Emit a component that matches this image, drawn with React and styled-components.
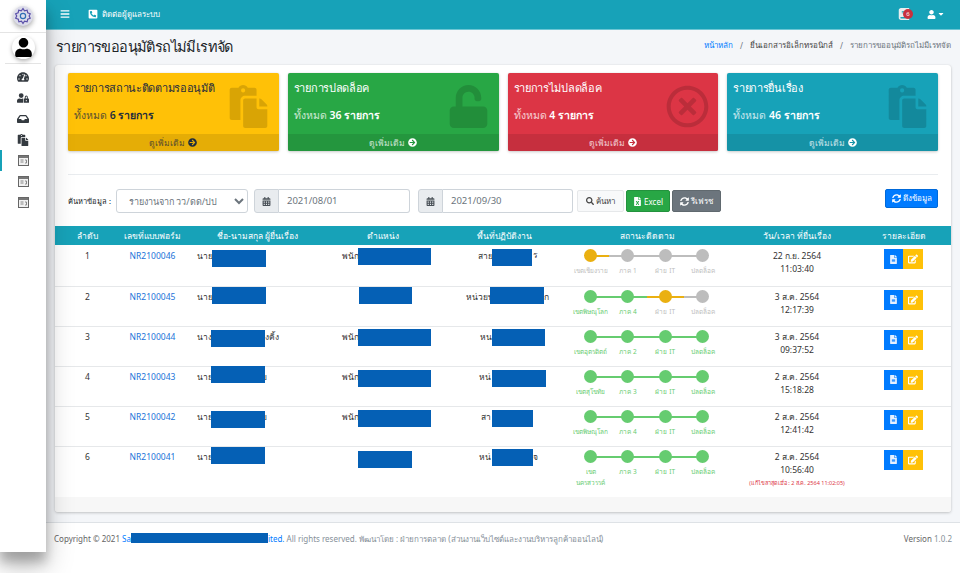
import React from 'react'
import styled, {createGlobalStyle} from 'styled-components'
import {
  FaBars, FaPhoneSquareAlt, FaUser, FaCaretDown, FaTachometerAlt, FaUserLock, FaInbox, FaPaste,
  FaUnlock, FaRegTimesCircle, FaArrowCircleRight, FaCalendarAlt, FaSearch, FaFileExcel, FaSyncAlt,
  FaFileAlt, FaEdit, FaBook,
} from 'react-icons/fa'

const GlobalStyle = createGlobalStyle`
  html, body {
    margin: 0;
    height: 573px;
    overflow: hidden;
    background: #fff;
    font-family: "Noto Sans", Inter, "Liberation Sans", sans-serif;
    color: #212529;
  }
  * { box-sizing: border-box; }
`

const boxes = [
  {title: 'รายการสถานะติดตามรออนุมัติ', total: '6 รายการ', bg: '#ffc107', strip: '#e5ad06', color: '#1f2d3d', Icon: FaPaste},
  {title: 'รายการปลดล็อค', total: '36 รายการ', bg: '#28a745', strip: '#24963e', color: '#fff', Icon: FaUnlock},
  {title: 'รายการไม่ปลดล็อค', total: '4 รายการ', bg: '#dc3545', strip: '#c62f3e', color: '#fff', Icon: FaRegTimesCircle},
  {title: 'รายการยื่นเรื่อง', total: '46 รายการ', bg: '#17a2b8', strip: '#1592a6', color: '#fff', Icon: FaPaste},
]

// ชื่อ ตำแหน่ง พื้นที่ถูกบังด้วยแถบสีน้ำเงิน x,y,w คือตำแหน่งแถบในช่อง
const rows = [
  {
    no: 1, form: 'NR2100046', date: '22 ก.ย. 2564', time: '11:03:40', current: 0,
    steps: ['เขตเชียงราย', 'ภาค 1', 'ฝ่าย IT', 'ปลดล็อค'],
    name: {lead: 'นาย', x: 27, y: 5, w: 54},
    pos: {lead: 'พนัก', x: 28, y: 3, w: 73},
    area: {lead: 'สาย', pad: 42, x: 56, y: 4, w: 40, tail: 'ร', tailX: 97},
  },
  {
    no: 2, form: 'NR2100045', date: '3 ส.ค. 2564', time: '12:17:39', current: 2,
    steps: ['เขตพิษณุโลก', 'ภาค 4', 'ฝ่าย IT', 'ปลดล็อค'],
    name: {lead: 'นาย', x: 27, y: 0, w: 54},
    pos: {x: 29, y: 0, w: 53},
    area: {lead: 'หน่วยบ', pad: 30, x: 54, y: 0, w: 54, tail: 'ก', tailX: 108},
  },
  {
    no: 3, form: 'NR2100044', date: '3 ส.ค. 2564', time: '09:37:52', current: 4,
    steps: ['เขตอุตรดิตถ์', 'ภาค 2', 'ฝ่าย IT', 'ปลดล็อค'],
    name: {lead: 'นาง', x: 26, y: 3, w: 54, tail: 'งคิ้ง', tailX: 80},
    pos: {lead: 'พนัก', x: 28, y: 2, w: 73},
    area: {lead: 'หน', pad: 44, x: 56, y: 2, w: 53},
  },
  {
    no: 4, form: 'NR2100043', date: '2 ส.ค. 2564', time: '15:18:28', current: 4,
    steps: ['เขตสุโขทัย', 'ภาค 3', 'ฝ่าย IT', 'ปลดล็อค'],
    name: {lead: 'นาย', x: 26, y: -1, w: 54, tail: 'ย', tailX: 77},
    pos: {lead: 'พนัก', x: 28, y: 3, w: 73},
    area: {lead: 'หน่', pad: 43, x: 56, y: 3, w: 54},
  },
  {
    no: 5, form: 'NR2100042', date: '2 ส.ค. 2564', time: '12:41:42', current: 4,
    steps: ['เขตพิษณุโลก', 'ภาค 4', 'ฝ่าย IT', 'ปลดล็อค'],
    name: {lead: 'นาย', x: 26, y: 4, w: 54, tail: 'ย', tailX: 77},
    pos: {lead: 'พนัก', x: 28, y: 3, w: 73},
    area: {lead: 'สา', pad: 45, x: 56, y: 3, w: 41},
  },
  {
    no: 6, form: 'NR2100041', date: '2 ส.ค. 2564', time: '10:56:40', current: 4,
    steps: ['เขต\nนครสวรรค์', 'ภาค 3', 'ฝ่าย IT', 'ปลดล็อค'],
    edited: '(แก้ไขล่าสุดเมื่อ : 2 ส.ค. 2564 11:02:05)',
    name: {lead: 'นาย', x: 26, y: 0, w: 54},
    pos: {x: 28, y: 4, w: 54},
    area: {lead: 'หน่', pad: 43, x: 56, y: 2, w: 41, tail: 'จ', tailX: 97},
  },
]

const LogoMark = () => (
  <svg width="18" height="18" viewBox="0 0 24 24" fill="none" stroke="#5a4fa8" strokeWidth="1.6">
    <path d="M12 2l2 3 3.500-.8.800 3.500 3.300 1.300-1.400 3 1.400 3-3.300 1.300-.8 3.500-3.500-.8-2 3-2-3-3.500.8-.8-3.500L2.200 15l1.400-3-1.400-3 3.300-1.300.8-3.500 3.500.8z" />
    <circle cx="12" cy="12" r="3.500" stroke="#2f6fb5" />
  </svg>
)

const FormIcon = () => (
  <svg width="11" height="11" viewBox="0 0 11 11">
    <rect x=".5" y=".5" width="10" height="10" fill="#f1f1f1" stroke="#666" />
    <rect x="1" y="1" width="9" height="2" fill="#777" />
    <path d="M2.500 5h3M2.500 7h3M7 5h1.500v3H7" stroke="#888" fill="none" />
  </svg>
)

const Masked = ({lead, pad, x, y, w, tail, tailX}) => (
  <MaskedCell $pad={pad}>
    {lead}
    {tail && <Tail $x={tailX}>{tail}</Tail>}
    <Redact $x={x} $y={y} $w={w} />
  </MaskedCell>
)

const Stepper = ({steps, current}) => (
  <StepList>
    {steps.map((label, i) => {
      const state = i < current ? 'done' : i === current ? 'active' : 'idle'
      return (
        <Step key={i} $state={state} $first={i === 0} $last={i === steps.length - 1}>
          <Dot $state={state} />
          <StepLabel $done={state === 'done'}>{label}</StepLabel>
        </Step>
      )
    })}
  </StepList>
)

const App = () => (
  <Page>
    <GlobalStyle />
    <Sidebar>
      <LogoRow><LogoBadge><LogoMark /></LogoBadge></LogoRow>
      <AvatarRow><Avatar><FaUser size={19} /></Avatar></AvatarRow>
      <SideMenu>
        <SideItem><FaTachometerAlt /></SideItem>
        <SideItem><FaUserLock /></SideItem>
        <SideItem><FaInbox /></SideItem>
        <SideItem><FaPaste /></SideItem>
        <SideItem $active><FormIcon /></SideItem>
        <SideItem><FormIcon /></SideItem>
        <SideItem><FormIcon /></SideItem>
      </SideMenu>
    </Sidebar>

    <Main>
      <Navbar>
        <NavLeft>
          <FaBars size={10} />
          <NavContact><FaPhoneSquareAlt size={10} />ติดต่อผู้ดูแลระบบ</NavContact>
        </NavLeft>
        <NavRight>
          <NavBell><FaBook size={12} color="#e8eef0" /><Badge>6</Badge></NavBell>
          <NavUser><FaUser size={9} /><FaCaretDown size={8} /></NavUser>
        </NavRight>
      </Navbar>

      <Content>
        <Header>
          <Title>รายการขออนุมัติรถไม่มีเรทจัด</Title>
          <Crumbs>
            <CrumbLink>หน้าหลัก</CrumbLink>
            <CrumbSep>/</CrumbSep>
            <span>ยื่นเอกสารอิเล็กทรอนิกส์</span>
            <CrumbSep>/</CrumbSep>
            <CrumbLast>รายการขออนุมัติรถไม่มีเรทจัด</CrumbLast>
          </Crumbs>
        </Header>

        <Card>
          <CardBody>
            <BoxGrid>
              {boxes.map(({title, total, bg, strip, color, Icon}) => (
                <SmallBox key={title} $bg={bg} $color={color}>
                  <BoxInner>
                    <BoxTitle>{title}</BoxTitle>
                    <BoxTotal><BoxTotalLabel>ทั้งหมด</BoxTotalLabel> <strong>{total}</strong></BoxTotal>
                    <BoxIcon><Icon /></BoxIcon>
                  </BoxInner>
                  <BoxMore $bg={strip}><BoxTotalLabel>ดูเพิ่มเติม</BoxTotalLabel> <FaArrowCircleRight size={9} /></BoxMore>
                </SmallBox>
              ))}
            </BoxGrid>

            <Divider />

            <Filters>
              <FilterLabel>ค้นหาข้อมูล :</FilterLabel>
              <Select defaultValue="a">
                <option value="a">รายงานจาก วว/ดด/ปป</option>
              </Select>
              <DateGroup $w={156}>
                <DateIcon><FaCalendarAlt size={9} /></DateIcon>
                <DateValue>2021/08/01</DateValue>
              </DateGroup>
              <DateGroup $w={155}>
                <DateIcon><FaCalendarAlt size={9} /></DateIcon>
                <DateValue>2021/09/30</DateValue>
              </DateGroup>
              <ActionButton $w={47} $bg="#f8f9fa" $color="#444" $line="#e6e8ea"><FaSearch size={8} />ค้นหา</ActionButton>
              <ActionButton $w={44} $bg="#28a745" $color="#fff" $line="#23923d"><FaFileExcel size={9} />Excel</ActionButton>
              <ActionButton $w={49} $bg="#6c757d" $color="#fff" $line="#60696f"><FaSyncAlt size={9} />รีเฟรช</ActionButton>
              <PullButton><FaSyncAlt size={9} />ดึงข้อมูล</PullButton>
            </Filters>
          </CardBody>

          <Table>
            <colgroup>
              <col width="65" /><col width="65" /><col width="145" /><col width="106" />
              <col width="136" /><col width="150" /><col width="150" /><col width="79" />
            </colgroup>
            <thead>
              <tr>
                <Th>ลำดับ</Th>
                <Th>เลขที่แบบฟอร์ม</Th>
                <Th>ชื่อ-นามสกุล ผู้ยื่นเรื่อง</Th>
                <Th>ตำแหน่ง</Th>
                <Th>พื้นที่ปฏิบัติงาน</Th>
                <Th>สถานะติดตาม</Th>
                <Th>วัน/เวลา ที่ยื่นเรื่อง</Th>
                <Th $shift>รายละเอียด</Th>
              </tr>
            </thead>
            <tbody>
              {rows.map((row) => (
                <Row key={row.no} $tall={row.edited}>
                  <Td>{row.no}</Td>
                  <Td><FormLink>{row.form}</FormLink></Td>
                  <Masked {...row.name} />
                  <Masked {...row.pos} />
                  <Masked {...row.area} />
                  <StepCell><Stepper steps={row.steps} current={row.current} /></StepCell>
                  <Td>
                    {row.date}<br />{row.time}
                    {row.edited && <Edited>{row.edited}</Edited>}
                  </Td>
                  <ActionCell>
                    <ActionPair>
                      <IconButton $bg="#007bff" $color="#e6f0ff"><FaFileAlt size={9} /></IconButton>
                      <IconButton $bg="#ffc107" $color="#fff"><FaEdit size={10} /></IconButton>
                    </ActionPair>
                  </ActionCell>
                </Row>
              ))}
            </tbody>
          </Table>
          <CardFoot />
        </Card>
      </Content>

      <Footer>
        <FooterText>
          <strong>Copyright © 2021 </strong>
          <FooterLink>Sa<FooterMask />ited.</FooterLink>
          {' '}All rights reserved. พัฒนาโดย : ฝ่ายการตลาด (ส่วนงานเว็บไซต์และงานบริหารลูกค้าออนไลน์)
        </FooterText>
        <FooterText><strong>Version</strong> 1.0.2</FooterText>
      </Footer>
    </Main>
  </Page>
)

export default App

const Page = styled.div`
  display: flex;
  width: 960px;
  height: 573px;
  overflow: hidden;
`

const Sidebar = styled.aside`
  flex: 0 0 46px;
  height: 552px;
  background: #fff;
  position: relative;
  z-index: 2;
  box-shadow: 0 14px 28px rgba(0, 0, 0, .25), 0 10px 10px rgba(0, 0, 0, .22);
`

const LogoRow = styled.div`
  display: flex;
  justify-content: center;
  align-items: center;
  height: 33px;
  border-bottom: 1px solid #e4e4e4;
`

const LogoBadge = styled.div`
  display: flex;
  align-items: center;
  justify-content: center;
  width: 20px;
  height: 20px;
  border-radius: 50%;
  background: #dcdcea;
  box-shadow: 0 2px 5px rgba(0, 0, 0, .35);
`

const AvatarRow = styled.div`
  display: flex;
  justify-content: center;
  margin: 3px 5px 0;
  height: 28px;
  border-bottom: 1px solid #e4e4e4;
`

const Avatar = styled.div`
  display: flex;
  justify-content: center;
  align-items: center;
  width: 23px;
  height: 23px;
  border-radius: 50%;
  background: #fff;
  color: #000;
  box-shadow: 0 2px 4px rgba(0, 0, 0, .3);
`

const SideMenu = styled.nav`
  display: flex;
  flex-direction: column;
  margin-top: 2px;
`

const SideItem = styled.div`
  display: flex;
  justify-content: center;
  align-items: center;
  height: 21px;
  font-size: 12px;
  color: #343a40;
  border-left: 2px solid ${(p) => (p.$active ? '#17a2b8' : 'transparent')};
  padding-right: 2px;
`

const Main = styled.div`
  flex: 1;
  display: flex;
  flex-direction: column;
  min-width: 0;
  height: 573px;
`

const Navbar = styled.header`
  flex: none;
  display: flex;
  justify-content: space-between;
  align-items: center;
  height: 30px;
  padding: 0 15px 1px 14px;
  background: #17a2b8;
  border-bottom: 1px solid #6cc6d4;
  color: #fff;
`

const NavLeft = styled.div`
  display: flex;
  align-items: center;
  gap: 18px;
`

const NavContact = styled.div`
  display: flex;
  align-items: center;
  gap: 4px;
  font-size: 8px;
`

const NavRight = styled.div`
  display: flex;
  align-items: center;
  gap: 14px;
`

const NavBell = styled.div`
  position: relative;
  display: flex;
  width: 15px;
`

const Badge = styled.span`
  position: absolute;
  right: 0;
  top: 1px;
  width: 10px;
  height: 10px;
  border-radius: 5px;
  background: #c9303e;
  font-size: 6px;
  line-height: 10px;
  text-align: center;
`

const NavUser = styled.div`
  display: flex;
  align-items: center;
  gap: 1px;
`

const Content = styled.main`
  flex: 1;
  min-height: 0;
  padding: 0 9px;
  background: #f4f6f9;
`

const Header = styled.div`
  display: flex;
  justify-content: space-between;
  align-items: center;
  height: 35px;
  padding: 0 1px;
`

const Title = styled.h1`
  margin: -3px 0 0;
  font-size: 14.500px;
  font-weight: 400;
  letter-spacing: -.6px;
  color: #212529;
`

const Crumbs = styled.div`
  display: flex;
  align-items: center;
  gap: 7px;
  font-size: 8px;
  color: #444;
  margin-top: -4px;
  margin-right: -1px;
`

const CrumbLink = styled.span`
  color: #007bff;
`

const CrumbSep = styled.span`
  color: #6c757d;
`

const CrumbLast = styled.span`
  color: #6c757d;
`

const Card = styled.section`
  background: #fff;
  border-radius: 3px;
  box-shadow: 0 0 1px rgba(0, 0, 0, .125), 0 1px 3px rgba(0, 0, 0, .2);
  overflow: hidden;
`

const CardBody = styled.div`
  padding: 8px 13px 13px;
`

const BoxGrid = styled.div`
  display: grid;
  grid-template-columns: repeat(4, 1fr);
  gap: 9px;
`

const SmallBox = styled.div`
  border-radius: 2px;
  overflow: hidden;
  background: ${(p) => p.$bg};
  color: ${(p) => p.$color};
  box-shadow: 0 0 1px rgba(0, 0, 0, .125), 0 1px 3px rgba(0, 0, 0, .2);
`

const BoxInner = styled.div`
  position: relative;
  height: 61px;
  padding: 6px 6px 0 6px;
`

const BoxTitle = styled.div`
  font-size: 11px;
  line-height: 18px;
  font-weight: 500;
  letter-spacing: -.3px;
`

const BoxTotal = styled.div`
  margin-top: 9px;
  font-size: 10.500px;
  line-height: 18px;

  strong {
    font-weight: 600;
  }
`

const BoxTotalLabel = styled.span`
  opacity: .75;
`

const BoxIcon = styled.div`
  position: absolute;
  right: 9px;
  top: 12px;
  font-size: 43px;
  line-height: 0;
  color: rgba(0, 0, 0, .15);
`

const BoxMore = styled.div`
  display: flex;
  justify-content: center;
  align-items: center;
  gap: 3px;
  height: 17px;
  font-size: 8.500px;
  background: ${(p) => p.$bg};
`

const Divider = styled.hr`
  margin: 23px 0 14px;
  border: 0;
  border-top: 1px solid #e9ecef;
`

const Filters = styled.div`
  display: flex;
  align-items: flex-start;
`

const FilterLabel = styled.div`
  flex: 0 0 48px;
  font-size: 7.500px;
  line-height: 24px;
  white-space: nowrap;
`

const Select = styled.select`
  width: 132px;
  height: 24px;
  padding: 0 8px 0 8px;
  margin-right: 6px;
  font: inherit;
  font-size: 9px;
  color: #6c757d;
  background: #fff;
  border: 1px solid #ced4da;
  border-radius: 3px;
`

const DateGroup = styled.div`
  display: flex;
  width: ${(p) => p.$w}px;
  height: 24px;
  margin-right: 8px;
  &:last-of-type { margin-right: 4px; }
`

const DateIcon = styled.div`
  display: flex;
  align-items: center;
  justify-content: center;
  width: 25px;
  background: #e9ecef;
  color: #495057;
  border: 1px solid #ced4da;
  border-radius: 3px 0 0 3px;
`

const DateValue = styled.div`
  flex: 1;
  padding-left: 8px;
  font-size: 9.500px;
  line-height: 22px;
  color: #6c757d;
  border: 1px solid #ced4da;
  border-left: 0;
  border-radius: 0 3px 3px 0;
`

const ActionButton = styled.button`
  display: flex;
  align-items: center;
  justify-content: center;
  gap: 2px;
  width: ${(p) => p.$w}px;
  height: 22px;
  margin: 1px 2px 0 0;
  padding: 0;
  font: inherit;
  font-size: 8px;
  color: ${(p) => p.$color};
  background: ${(p) => p.$bg};
  border: 1px solid ${(p) => p.$line};
  border-radius: 2px;
`

const PullButton = styled.button`
  display: flex;
  align-items: center;
  justify-content: center;
  gap: 2px;
  width: 53px;
  height: 19px;
  margin-left: auto;
  padding: 0;
  font: inherit;
  font-size: 8px;
  color: #fff;
  background: #007bff;
  border: 1px solid #0069d9;
  border-radius: 2px;
`

const Table = styled.table`
  width: 896px;
  table-layout: fixed;
  border-collapse: collapse;
  font-size: 8.500px;
  line-height: 13px;
  color: #333;
`

const Th = styled.th`
  height: 19px;
  padding: 0 ${(p) => (p.$shift ? '16px' : '0')} 0 0;
  background: #17a2b8;
  color: #fff;
  font-weight: 400;
  font-size: 8.500px;
  text-align: center;
  white-space: nowrap;
`

const Row = styled.tr`
  height: ${(p) => (p.$tall ? '51px' : '40px')};
  border-top: 1px solid #e6e8ea;
  &:first-child { height: 41px; border-top: 0; }
  &:not(:first-child) > td { padding-top: 3px; }
`

const Td = styled.td`
  padding: 4px 0 0;
  text-align: center;
  vertical-align: top;
`

const MaskedCell = styled.td`
  position: relative;
  padding: 4px 0 0 ${(p) => p.$pad ?? 12}px;
  text-align: left;
  vertical-align: top;
  white-space: nowrap;
`

const Redact = styled.span`
  position: absolute;
  left: ${(p) => p.$x}px;
  top: ${(p) => p.$y}px;
  width: ${(p) => p.$w}px;
  height: 17px;
  background: #0560b5;
`

const Tail = styled.span`
  position: absolute;
  left: ${(p) => p.$x}px;
  top: 3px;
`

const FormLink = styled.a`
  color: #1a73d9;
`

const StepCell = styled.td`
  padding: 4px 0 0;
  vertical-align: top;
`

const StepList = styled.div`
  display: grid;
  grid-template-columns: repeat(4, 37.3px);
`

const Step = styled.div`
  position: relative;
  display: flex;
  flex-direction: column;
  align-items: center;

  &::before {
    content: '';
    position: absolute;
    top: 6px;
    left: ${(p) => (p.$first ? '50%' : '0')};
    right: ${(p) => (p.$last ? '50%' : '0')};
    height: 2px;
    background: ${(p) => stepColor(p.$state)};
  }
`

const stepColor = (state) => ({done: '#66cc70', active: '#eab011', idle: '#bdbdbd'}[state])

const Dot = styled.span`
  position: relative;
  width: 13px;
  height: 13px;
  border-radius: 50%;
  background: ${(p) => stepColor(p.$state)};
`

const StepLabel = styled.span`
  margin-top: 3px;
  font-size: 6.500px;
  line-height: 11px;
  white-space: pre;
  text-align: center;
  color: ${(p) => (p.$done ? '#66cc70' : '#bdbdbd')};
`

const Edited = styled.div`
  margin-top: 1px;
  font-size: 5.500px;
  line-height: 12px;
  color: #dc3545;
  white-space: nowrap;
`

const ActionCell = styled.td`
  padding: 4px 17px 0 0;
  vertical-align: top;
`

const ActionPair = styled.div`
  display: flex;
  justify-content: center;
`

const IconButton = styled.button`
  display: flex;
  align-items: center;
  justify-content: center;
  width: 19.500px;
  height: 20px;
  padding: 0;
  border: 0;
  color: ${(p) => p.$color};
  background: ${(p) => p.$bg};
`

const CardFoot = styled.div`
  height: 15px;
  background: #f7f7f7;
`

const Footer = styled.footer`
  flex: none;
  display: flex;
  justify-content: space-between;
  height: 51px;
  padding: 9px 8px 0;
  background: #fff;
  border-top: 1px solid #dee2e6;
`

const FooterText = styled.div`
  font-size: 8px;
  line-height: 13px;
  color: #869099;

  strong {
    color: #666;
    font-weight: 400;
  }
`

const FooterLink = styled.span`
  color: #007bff;
`

const FooterMask = styled.span`
  display: inline-block;
  width: 137px;
  height: 10px;
  vertical-align: -1px;
  background: #0560b5;
`
